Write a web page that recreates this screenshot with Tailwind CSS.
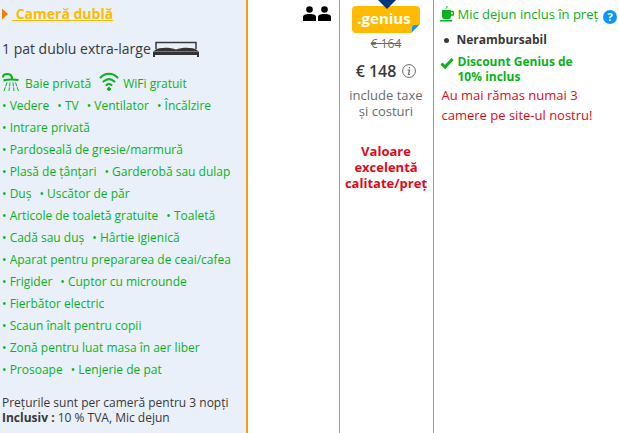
<!DOCTYPE html>
<html lang="ro">

<head>
    <meta charset="UTF-8">
    <meta name="viewport" content="width=device-width, initial-scale=1.0">
    <title>Cameră dublă</title>
    <script src="https://cdn.jsdelivr.net/npm/@tailwindcss/browser@4"></script>
</head>

<body class="bg-white font-['Open_Sans','Noto_Sans',sans-serif] text-[#383838]">
    <table class="w-full h-screen table-fixed border-collapse">
        <colgroup>
            <col class="w-[247px]">
            <col class="w-[92px]">
            <col class="w-[94px]">
            <col>
        </colgroup>
        <tbody>
            <tr class="align-top">
                <!-- Room -->
                <td class="bg-[#e9f0fa] border-r-2 border-[#f39c12] pl-0.5">
                    <a href="#room" class="flex items-center h-7 text-sm font-bold text-[#febb02]">
                        <svg class="w-1.5 h-3 mr-1 shrink-0" viewBox="0 0 6 12" fill="#f57c00">
                            <path d="M0 .5l6 5.500-6 5.500z"></path>
                        </svg>
                        <span class="underline whitespace-pre"> Cameră dublă</span>
                    </a>
                    <p class="flex items-center h-[42px] text-sm">
                        1 pat dublu extra-large
                        <svg class="w-[46px] h-4 ml-0.5" viewBox="0 0 46 16" fill="#333">
                            <path d="M3 8V1.500h40V8" fill="none" stroke="#383838" stroke-width="1.500"></path>
                            <path d="M2 9c4-3 15-3 21-.5C29 6 40 6 44 9l2 2v5h-2v-2H2v2H0v-5z"></path>
                            <path d="M1 10.500h44" stroke="#aaa" stroke-width=".6"></path>
                        </svg>
                    </p>
                    <div class="flex items-end h-6 text-xs leading-[20px] text-[#0ab21b]">
                        <svg class="w-[17px] h-5 mr-1.5 mb-0.5" viewBox="0 0 17 20" fill="none" stroke="#0ab21b">
                            <path d="M1 5.500C1 3 3 2 5.500 2S10 3.500 10 7" stroke-width="2.200"></path>
                            <path d="M1.500 8.500C5 7.300 13 7.300 16.500 8" stroke-width="2"></path>
                            <path d="M5 10.500l-3 8.500M8 10.500l-1 8.500M11 10.500l1 8.500M13.500 10.500l3 8.500" stroke-dasharray="4 1"></path>
                        </svg>
                        Baie privată
                        <svg class="w-5 h-5 ml-2 mr-1 mb-0.5" viewBox="0 0 20 20" fill="none" stroke="#0ab21b" stroke-width="2" stroke-linecap="round">
                            <path d="M1.500 5.500c5-5 12-5 17 0M4.500 9.500c3.500-3 7.500-3 11 0M7.500 13c1.500-1.500 3.500-1.500 5 0"></path>
                            <circle cx="10" cy="17" r="1.500" fill="#0ab21b" stroke-width="1"></circle>
                        </svg>
                        WiFi gratuit
                    </div>
                    <ul class="flex flex-wrap gap-x-2 pt-px text-xs leading-[22px] text-[#0ab21b]">
                        <li>• Vedere</li>
                        <li>• TV</li>
                        <li>• Ventilator</li>
                        <li>• Încălzire</li>
                        <li>• Intrare privată</li>
                        <li>• Pardoseală de gresie/marmură</li>
                        <li>• Plasă de ţânţari</li>
                        <li>• Garderobă sau dulap</li>
                        <li>• Duş</li>
                        <li>• Uscător de păr</li>
                        <li>• Articole de toaletă gratuite</li>
                        <li>• Toaletă</li>
                        <li>• Cadă sau duş</li>
                        <li>• Hârtie igienică</li>
                        <li>• Aparat pentru prepararea de ceai/cafea</li>
                        <li>• Frigider</li>
                        <li>• Cuptor cu microunde</li>
                        <li>• Fierbător electric</li>
                        <li>• Scaun înalt pentru copii</li>
                        <li>• Zonă pentru luat masa în aer liber</li>
                        <li>• Prosoape</li>
                        <li>• Lenjerie de pat</li>
                    </ul>
                    <p class="mt-3.5 text-xs leading-[15px]">
                        Prețurile sunt per cameră pentru 3 nopţi<br>
                        <b>Inclusiv :</b> 10 % TVA, Mic dejun
                    </p>
                </td>

                <!-- Occupancy -->
                <td class="pt-1.5 pr-2">
                    <div class="flex justify-end gap-0.5">
                        <svg class="w-[13px] h-[15px]" viewBox="0 0 13 15">
                            <circle cx="6.500" cy="3.500" r="3.300"></circle>
                            <path d="M0 15v-4c0-2 2-3 6.500-3s6.500 1 6.500 3v4z"></path>
                        </svg>
                        <svg class="w-[13px] h-[15px]" viewBox="0 0 13 15">
                            <circle cx="6.500" cy="3.500" r="3.300"></circle>
                            <path d="M0 15v-4c0-2 2-3 6.500-3s6.500 1 6.500 3v4z"></path>
                        </svg>
                    </div>
                </td>

                <!-- Price -->
                <td class="border-x border-[#57b0f5] text-center">
                    <div class="relative w-[68px] h-[27px] mt-1.5 mx-auto rounded bg-[#febb02] text-white font-bold leading-6">
                        <svg class="absolute -top-1.5 left-[26px] w-[18px] h-[9px]" viewBox="0 0 18 9" fill="#003580">
                            <path d="M0 0h18L9 9z"></path>
                        </svg>
                        <span class="relative block -ml-1 text-[15px]">.genius</span>
                        <svg class="absolute right-0 bottom-0 w-[9px] h-[9px]" viewBox="0 0 9 9">
                            <path d="M0 9L9 0v9z" fill="#fff"></path>
                            <path d="M0 9c1-1 1-3 1-5 0-2 1-3 3-3 2 0 4 0 5-1z" fill="#0896ff"></path>
                        </svg>
                    </div>
                    <p class="text-xs leading-[22px] text-[#6b6b6b] line-through">€ 164</p>
                    <p class="flex items-center justify-center gap-1.5 h-8 text-base font-semibold">
                        € 148
                        <svg class="w-3.5 h-3.5" viewBox="0 0 14 14" fill="none" stroke="#6b6b6b">
                            <circle cx="7" cy="7" r="6.400"></circle>
                            <path d="M5.500 6h2l-1 4.500h1.500M7.500 3v1.300" stroke-width="1.200"></path>
                        </svg>
                    </p>
                    <p class="text-[13px] leading-4 text-[#6b6b6b]">include taxe<br>și costuri</p>
                    <p class="mt-6 text-[13px] leading-4 font-bold text-[#e00b18]">Valoare<br>excelentă<br>calitate/preţ</p>
                </td>

                <!-- Conditions -->
                <td class="pl-1.5 pr-0.5">
                    <div class="flex items-start pt-1.5">
                        <svg class="w-3.5 h-4 mr-1 shrink-0" viewBox="0 0 14 16" fill="#0ab21b">
                            <path d="M2 4h9v6c0 2-1 3-2 3H4c-1 0-2-1-2-3zM0 14h12v1.500H0z"></path>
                            <path d="M11 5.500h2.300v3.500H11" fill="none" stroke="#0ab21b" stroke-width="1.300"></path>
                            <path d="M6 3c-1-1 2-1 1-3" fill="none" stroke="#0ab21b"></path>
                        </svg>
                        <span class="text-[13px] leading-4 whitespace-nowrap text-[#0ab21b]">Mic dejun inclus în preț</span>
                        <button type="button" aria-label="Detalii" class="ml-auto mt-1 w-3.5 h-3.5 shrink-0 rounded-full bg-[#0896ff] text-white text-[11px] leading-[14px] font-bold">?</button>
                    </div>
                    <ul class="text-xs font-bold">
                        <li class="flex items-center mt-2">
                            <span class="w-[5px] h-[5px] mx-1 rounded-full bg-[#383838]"></span>
                            <span class="ml-1">Nerambursabil</span>
                        </li>
                        <li class="flex items-start mt-1.5 leading-[15px] text-[#0ab21b]">
                            <svg class="w-3.5 h-3.5 mt-0.5 mr-1 shrink-0" viewBox="0 0 14 14" fill="none" stroke="#0ab21b" stroke-width="3">
                                <path d="M1.500 7.500l3.500 3.500L12.500 3"></path>
                            </svg>
                            <span>Discount Genius de<br>10% inclus</span>
                        </li>
                    </ul>
                    <p class="pl-0.5 mt-px text-[13px] leading-5 text-[#e00b18]">Au mai rămas numai 3<br>camere pe site-ul nostru!</p>
                </td>
            </tr>
        </tbody>
    </table>
</body>

</html>
